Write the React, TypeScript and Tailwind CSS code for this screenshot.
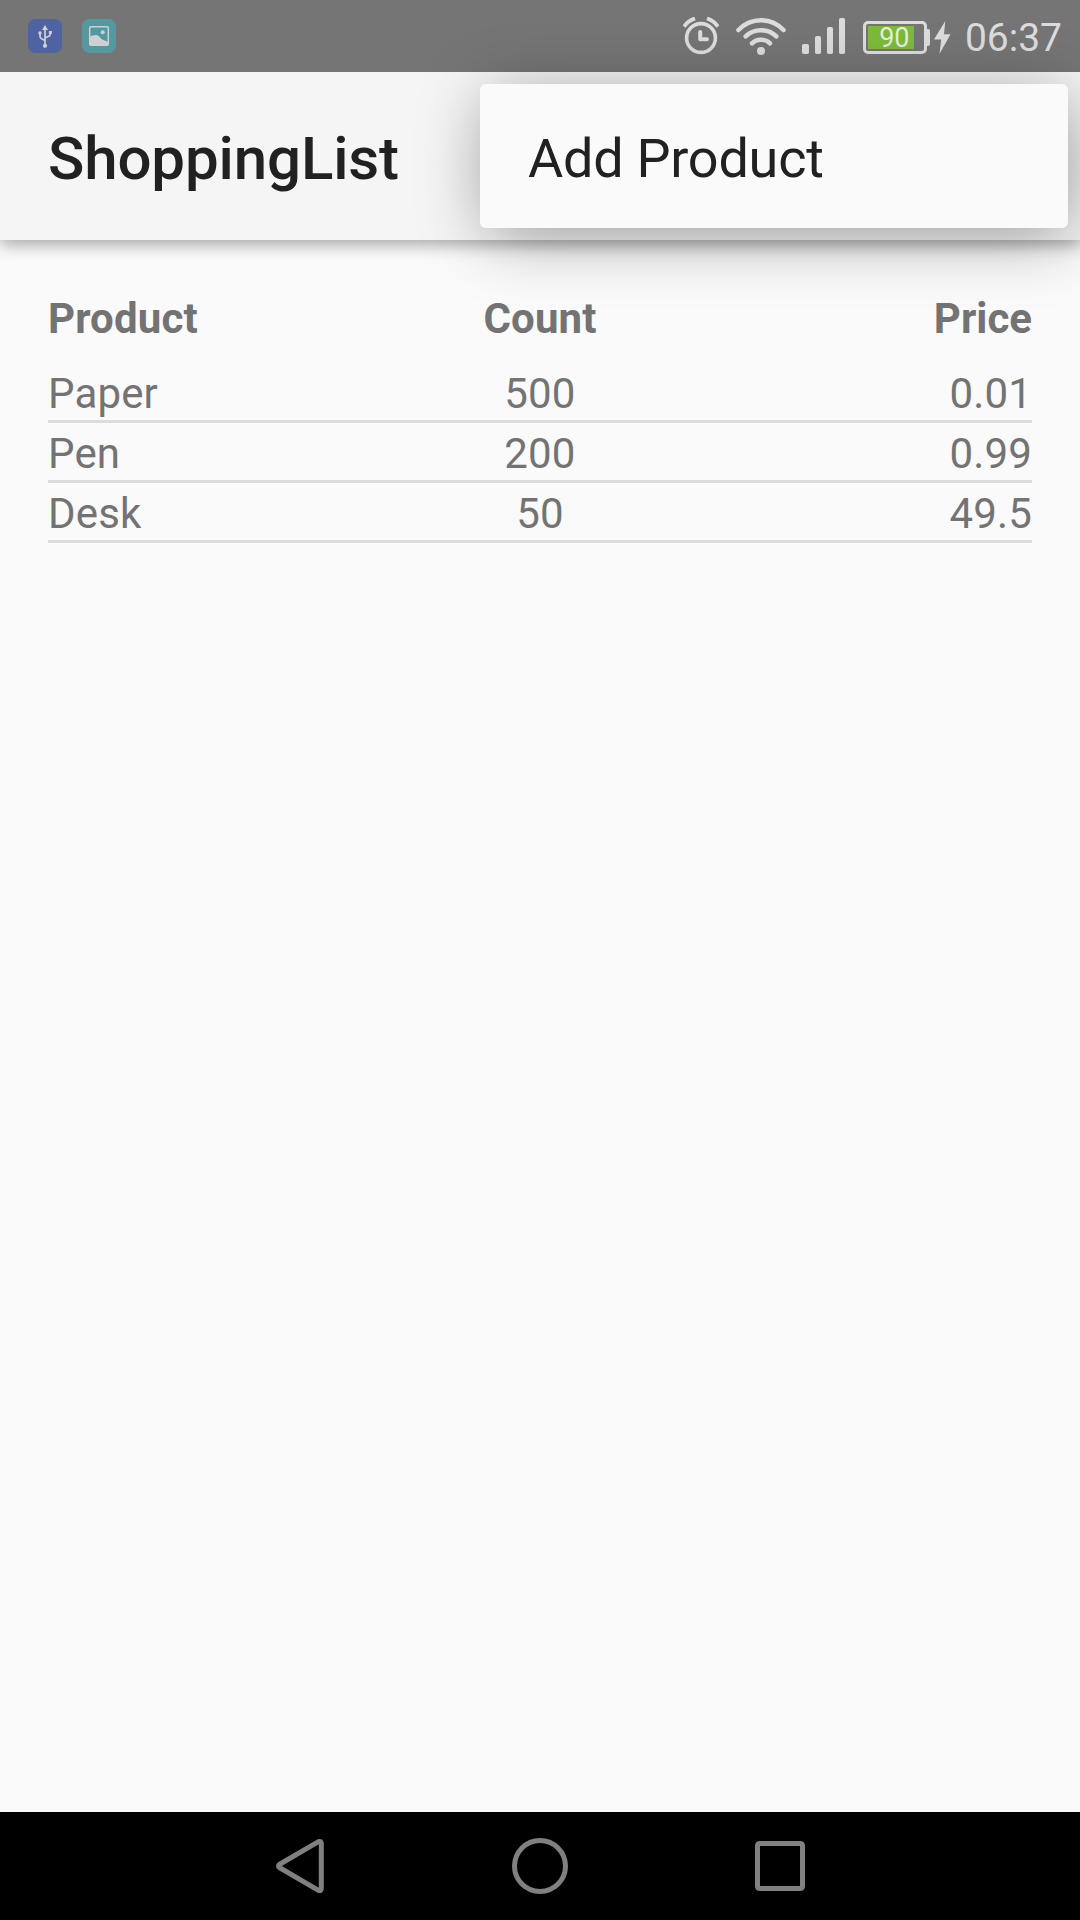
const products = [
  { name: "Paper", count: "500", price: "0.01" },
  { name: "Pen", count: "200", price: "0.99" },
  { name: "Desk", count: "50", price: "49.5" },
];

function UsbIcon() {
  return (
    <svg width="34" height="34" viewBox="0 0 34 34">
      <rect width="34" height="34" rx="7.500" fill="#4f62a1" />
      <g fill="none" stroke="#cdd0d6" strokeWidth="1.7">
        <path d="M17 9v18M17 21.500l-3.500-1.800Q12 18.800 12 17V14M17 19l3.700-1.800Q22.400 16.300 22.400 14.500V13" />
      </g>
      <g fill="#cdd0d6">
        <path d="M17 6l3 5h-6z" />
        <circle cx="17" cy="26.800" r="2.100" />
        <circle cx="12" cy="14" r="1.700" />
        <rect x="20.900" y="12" width="3" height="3" />
      </g>
    </svg>
  );
}

function GalleryIcon() {
  return (
    <svg width="34" height="34" viewBox="0 0 34 34">
      <rect width="34" height="34" rx="7.500" fill="#5499a0" />
      <rect x="7.700" y="7.700" width="18.600" height="18.600" rx="1.200" fill="none" stroke="#cdd1d2" strokeWidth="1.500" />
      <path d="M8 17.500c2-1 4-1.600 6-1.500 3 .200 4 3 6.500 4.500 2 1.200 3.500 1.500 5.500 2.500v3H8z" fill="#cdd1d2" />
      <circle cx="20.700" cy="13.200" r="2" fill="#cdd1d2" />
    </svg>
  );
}

function AlarmIcon() {
  return (
    <svg width="36" height="38" viewBox="0 0 36 38" fill="none" stroke="#dcdcdc">
      <circle cx="18" cy="21" r="14.400" strokeWidth="3.600" />
      <path d="M17.200 15v7.200h6.800" strokeWidth="4" strokeLinecap="round" strokeLinejoin="round" />
      <path d="M1 9.500Q5.500 3.500 12 1.400M35 9.500Q30.500 3.500 24 1.400" strokeWidth="3.800" />
    </svg>
  );
}

function WifiIcon() {
  return (
    <svg width="50" height="38" viewBox="0 0 50 38" fill="none" stroke="#dcdcdc" strokeWidth="4.600" strokeLinecap="round">
      <path d="M2.500 13Q12 3.300 25 3.300T47.500 13" />
      <path d="M9.700 19.300Q16 13.200 25 13.200T40.300 19.300" />
      <path d="M16 26.300Q19.500 22.700 25 22.700T34 26.300" />
      <circle cx="25" cy="34" r="4" fill="#dcdcdc" stroke="none" />
    </svg>
  );
}

function SignalIcon() {
  return (
    <svg width="44" height="36" viewBox="0 0 44 36" fill="#dcdcdc">
      <rect x="0" y="26" width="7" height="10" rx="1.800" />
      <rect x="13" y="18" width="6" height="18" rx="1.800" />
      <rect x="25" y="9" width="6" height="27" rx="1.800" />
      <rect x="37" y="0" width="6" height="36" rx="1.800" />
    </svg>
  );
}

function Battery() {
  return (
    <div className="flex items-center">
      <div className="h-[33px] w-16 rounded-[5px] border-[3px] border-[#dcdcdc] p-[2px]">
        <div className="flex h-[23px] w-[46px] items-center justify-center bg-[#7cba3b] pl-[7px] pt-px text-[27px] leading-none text-[#e4eedc]">
          90
        </div>
      </div>
      <div className="h-[17px] w-[3px] rounded-r-[2px] bg-[#dcdcdc]" />
      <svg className="ml-1" width="17" height="33" viewBox="0 0 17 33" fill="#dcdcdc">
        <path d="M11.300 0L0 18.500h7.200L5.500 33 16.500 13.300H10z" />
      </svg>
    </div>
  );
}

function StatusBar() {
  return (
    <header className="relative flex h-[72px] shrink-0 justify-between bg-[#757575] pl-7 pr-[18px]">
      <div className="flex gap-5 pt-[19px]">
        <UsbIcon />
        <GalleryIcon />
      </div>
      <div className="flex items-start">
        <div className="mr-[17px] pt-[17px]"><AlarmIcon /></div>
        <div className="mr-4 pt-[17px]"><WifiIcon /></div>
        <div className="mr-[17px] pt-[18px]"><SignalIcon /></div>
        <div className="mr-[14px] pt-[21px]"><Battery /></div>
        <div className="pt-[15px] text-[39px] leading-[46px] text-[#dcdcdc]">06:37</div>
      </div>
    </header>
  );
}

export default function App() {
  return (
    <div className="relative flex h-[1920px] w-[1080px] flex-col overflow-hidden bg-[#fafafa] font-['Roboto',sans-serif]">
      <StatusBar />
      <div className="flex h-[168px] shrink-0 items-center bg-[#f5f5f5] px-12 pt-[5px] shadow-[0_4px_16px_rgba(0,0,0,0.36)]">
        <h1 className="text-[60px] font-medium leading-[70px] tracking-[-0.12px] text-[#212121]">ShoppingList</h1>
      </div>

      <main className="flex-1 px-12 pt-[54px] text-[42px] leading-[49px] tracking-[0.15px] text-[#737373]">
        <div className="grid h-[69px] grid-cols-3 font-bold">
          <div>Product</div>
          <div className="text-center">Count</div>
          <div className="text-right tracking-normal">Price</div>
        </div>
        {products.map((p) => (
          <div key={p.name} className="grid h-[60px] grid-cols-3 border-b-[3px] border-[#dcdcdc] pt-[6px]">
            <div>{p.name}</div>
            <div className="text-center">{p.count}</div>
            <div className="text-right">{p.price}</div>
          </div>
        ))}
      </main>

      <nav className="flex h-[108px] shrink-0 items-center justify-center gap-[180px] bg-black">
        <svg width="60" height="60" viewBox="0 0 60 60" fill="none" stroke="#808080" strokeWidth="5" strokeLinejoin="round">
          <path d="M9.300 28.500Q7.700 30 9.300 31.500L48.500 54.300Q51.300 55.300 51.300 52.500V7.500Q51.300 4.700 48.500 5.700Z" />
        </svg>
        <svg width="60" height="60" viewBox="0 0 60 60" fill="none" stroke="#808080" strokeWidth="5">
          <circle cx="30" cy="30" r="25.500" />
        </svg>
        <svg width="60" height="60" viewBox="0 0 60 60" fill="none" stroke="#808080" strokeWidth="5">
          <rect x="7.500" y="7.500" width="45" height="45" rx="2" />
        </svg>
      </nav>

      <div className="absolute left-[480px] top-[84px] flex h-36 w-[588px] items-center rounded-[6px] bg-[#fafafa] px-12 pt-[5px] text-[54px] leading-[63px] tracking-[-0.25px] text-[#212121] shadow-[4px_10px_68px_-4px_rgba(0,0,0,0.4)]">
        Add Product
      </div>
    </div>
  );
}
